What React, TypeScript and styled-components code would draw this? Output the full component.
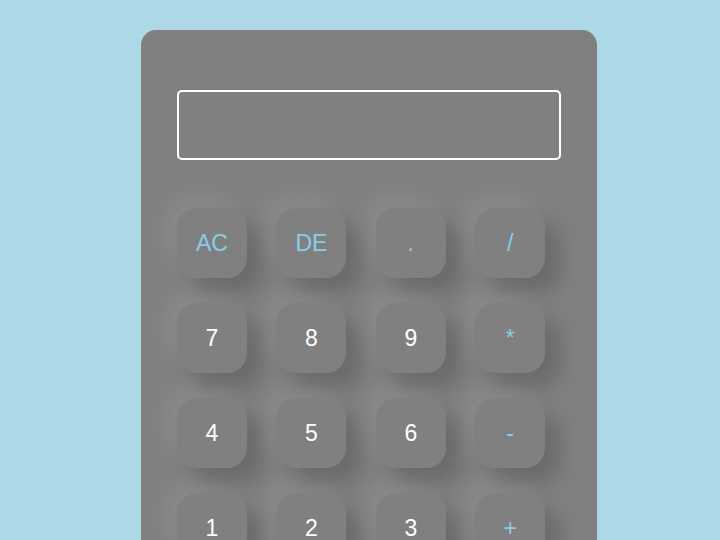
import styled, { createGlobalStyle } from "styled-components";

const GlobalStyle = createGlobalStyle`
    html, body {
        margin: 0;
        padding: 0;
        background: #add8e6;
        font-family: "Liberation Sans", Arial, sans-serif;
        overflow: hidden;
    }
`;

const Page = styled.div`
    display: flex;
    justify-content: center;
    padding: 30px 0 0 18px;
    height: 540px;
    box-sizing: border-box;
    overflow: hidden;
`;

const Calculator = styled.div`
    width: 456px;
    flex-shrink: 0;
    background: #808080;
    border-radius: 15px;
    padding: 60px 36px 40px;
    box-sizing: border-box;
    height: 640px;
`;

const Display = styled.div`
    height: 70px;
    border: 2px solid #fff;
    border-radius: 5px;
    box-sizing: border-box;
`;

const Keys = styled.div`
    display: grid;
    grid-template-columns: repeat(4, 70px);
    column-gap: 29.4px;
    row-gap: 25px;
    margin-top: 48px;
`;

const Key = styled.button<{ op?: boolean }>`
    width: 70px;
    height: 70px;
    border: none;
    border-radius: 20px;
    background: #808080;
    color: ${(props) => (props.op ? "#87ceeb" : "#ffffff")};
    font-family: "Liberation Sans", Arial, sans-serif;
    font-size: 23px;
    padding: 0;
    box-shadow: 15px 15px 20px rgba(0, 0, 0, 0.17),
        -12px -12px 20px rgba(255, 255, 255, 0.07);
    cursor: pointer;
`;

const keys = [
    ["AC", true], ["DE", true], [".", true], ["/", true],
    ["7", false], ["8", false], ["9", false], ["*", true],
    ["4", false], ["5", false], ["6", false], ["-", true],
    ["1", false], ["2", false], ["3", false], ["+", true],
    ["00", false], ["0", false], ["=", true],
] as const;

const App = () => {
    return (
        <>
            <GlobalStyle />
            <Page>
                <Calculator>
                    <Display />
                    <Keys>
                        {keys.map(([label, op]) => (
                            <Key key={label} op={op}>{label}</Key>
                        ))}
                    </Keys>
                </Calculator>
            </Page>
        </>
    );
};

export default App;
